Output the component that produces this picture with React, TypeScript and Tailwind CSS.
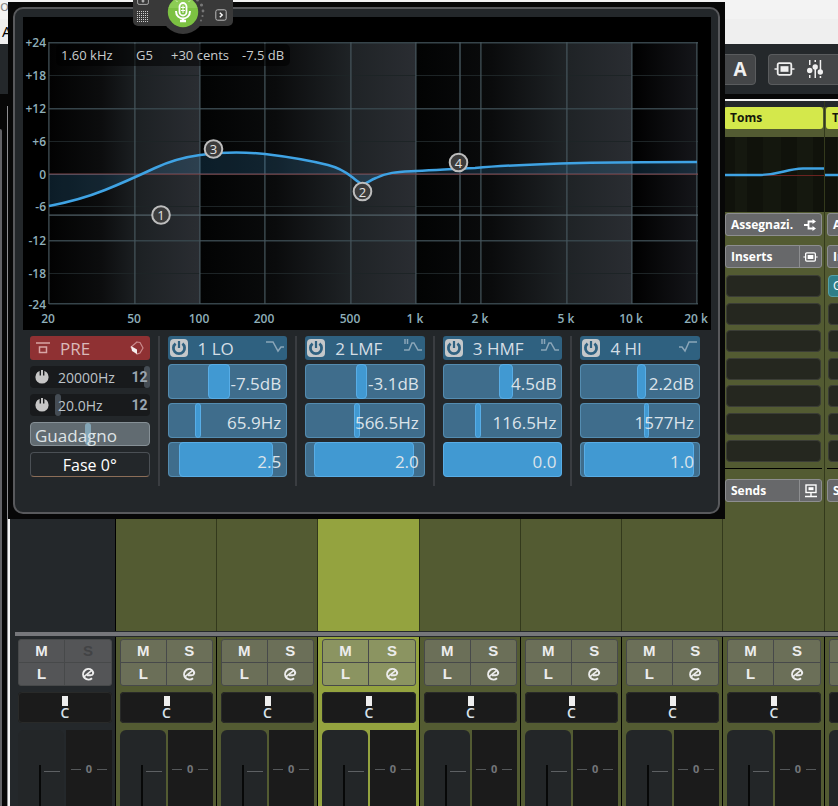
import React from "react";

const UI = "font-['Open_Sans','Noto_Sans',sans-serif]";
const COLUMNS =
  "grid grid-cols-[106px_101px_101px_102px_101px_101px_101px_102px_101px]";

type Bar = { name: string; value: string; from: number; to: number };
type Shape = "lowShelf" | "bell" | "highShelf";
type Band = { title: string; shape: Shape; bars: Bar[] };

const bands: Band[] = [
  {
    title: "1 LO",
    shape: "lowShelf",
    bars: [
      { name: "Gain", value: "-7.5dB", from: 40, to: 62 },
      { name: "Frequency", value: "65.9Hz", from: 27, to: 33 },
      { name: "Q", value: "2.5", from: 11, to: 105 },
    ],
  },
  {
    title: "2 LMF",
    shape: "bell",
    bars: [
      { name: "Gain", value: "-3.1dB", from: 51, to: 62 },
      { name: "Frequency", value: "566.5Hz", from: 49, to: 55 },
      { name: "Q", value: "2.0", from: 9, to: 108 },
    ],
  },
  {
    title: "3 HMF",
    shape: "bell",
    bars: [
      { name: "Gain", value: "4.5dB", from: 56, to: 70 },
      { name: "Frequency", value: "116.5Hz", from: 32, to: 38 },
      { name: "Q", value: "0.0", from: 0, to: 119 },
    ],
  },
  {
    title: "4 HI",
    shape: "highShelf",
    bars: [
      { name: "Gain", value: "2.2dB", from: 56, to: 65 },
      { name: "Frequency", value: "1577Hz", from: 63, to: 68 },
      { name: "Q", value: "1.0", from: 4, to: 113 },
    ],
  },
];

const levelLabels = [
  { y: 42, text: "+24", major: true },
  { y: 75, text: "+18", major: false },
  { y: 108, text: "+12", major: true },
  { y: 141, text: "+6", major: false },
  { y: 174, text: "0", major: false },
  { y: 206, text: "-6", major: false },
  { y: 240, text: "-12", major: true },
  { y: 273, text: "-18", major: false },
  { y: 304, text: "-24", major: true },
];

const freqLabels = [
  { x: 49, text: "20" },
  { x: 135, text: "50" },
  { x: 200, text: "100" },
  { x: 265, text: "200" },
  { x: 351, text: "500" },
  { x: 416, text: "1 k" },
  { x: 481, text: "2 k" },
  { x: 567, text: "5 k" },
  { x: 632, text: "10 k" },
  { x: 697, text: "20 k" },
];

const handles = [
  { x: 161, y: 215, text: "1" },
  { x: 362.5, y: 191.5, text: "2" },
  { x: 213.5, y: 149, text: "3" },
  { x: 458.5, y: 162.5, text: "4" },
];

const CURVE =
  "M49 206 C70 202 85 198 105 190 C125 182 140 175 155 168 C170 161 185 157 200 155 C222 152 245 152 265 154 C290 157 312 161 328 165 C340 168 347 173 352 177 C357 181 360 184 363 184 C367 184 370 180 376 178 C388 172 398 172 416 171 C440 170 450 169 475 168 C510 165 540 164 580 163 C620 162 660 162 697 162";

function PowerGlyph({ className }: { className: string }) {
  return (
    <svg viewBox="0 0 16 16" className={className} aria-hidden="true">
      <path
        d="M4.6 3.6 A5.6 5.6 0 1 0 11.4 3.6"
        fill="none"
        stroke="currentColor"
        strokeWidth="2.8"
      />
      <path d="M8 1 V8" stroke="currentColor" strokeWidth="2.2" />
    </svg>
  );
}

function PowerDisc() {
  return (
    <svg viewBox="0 0 14 14" className="size-3.5" aria-hidden="true">
      <circle cx="7" cy="7" r="6.6" fill="#c6c6c6" />
      <path d="M4.6 0 V5.5 H9.4 V0" fill="#181a1c" />
      <rect x="6" y="0" width="2" height="7" fill="#c6c6c6" />
    </svg>
  );
}

function ShapeGlyph({ shape }: { shape: Shape }) {
  return (
    <svg
      viewBox="0 0 20 16"
      className="mb-1 h-4 w-5 text-[#8ba6b8]"
      fill="none"
      stroke="currentColor"
      strokeWidth="1.5"
      aria-hidden="true"
    >
      {shape === "lowShelf" && <path d="M1 4 H8 L13 13 L16 9 H19" />}
      {shape === "bell" && (
        <>
          <path d="M2 1 V6 M4.500 1 V6" />
          <path d="M1 12 H6 L9 5 H11 L15 12 H19" />
        </>
      )}
      {shape === "highShelf" && <path d="M1 9 H4 L7 13 L11 4 H19" />}
    </svg>
  );
}

function InsertGlyph({ className }: { className: string }) {
  return (
    <svg viewBox="0 0 20 14" className={className} fill="none" aria-hidden="true">
      <path d="M0 7 H3 M17 7 H20" stroke="currentColor" strokeWidth="1.6" />
      <rect x="3.2" y="1.2" width="13.6" height="11.6" rx="1.5" stroke="currentColor" strokeWidth="1.8" />
      <rect x="6" y="4.2" width="8" height="5.6" fill="currentColor" />
    </svg>
  );
}

function Graph() {
  return (
    <svg viewBox="23 17 688 313" className={`block w-full ${UI}`} role="img" aria-label="EQ curve">
      <defs>
        <linearGradient id="decade">
          <stop offset="0" stopColor="#020303" />
          <stop offset="0.35" stopColor="#0a0b0c" />
          <stop offset="0.7" stopColor="#1f2326" />
          <stop offset="1" stopColor="#2a2d32" />
        </linearGradient>
        <linearGradient id="tail">
          <stop offset="0" stopColor="#000" />
          <stop offset="1" stopColor="#15161a" />
        </linearGradient>
        <linearGradient id="head">
          <stop offset="0" stopColor="#020202" />
          <stop offset="0.35" stopColor="#0c0d0e" />
          <stop offset="0.6" stopColor="#1d2124" />
          <stop offset="1" stopColor="#2a2d32" />
        </linearGradient>
      </defs>
      <rect x="23" y="17" width="688" height="313" fill="#000" />
      <rect x="49" y="42" width="151" height="262" fill="url(#head)" />
      <rect x="200" y="42" width="216" height="262" fill="url(#decade)" />
      <rect x="416" y="42" width="216" height="262" fill="url(#decade)" />
      <rect x="632" y="42" width="65" height="262" fill="url(#tail)" />
      {levelLabels.map((l) => (
        <rect
          key={l.text}
          x="49"
          y={l.text === "-24" ? 303 : l.y}
          width="649"
          height={l.major ? 1.5 : 1}
          fill={l.major ? "#36444a" : "#1d2426"}
        />
      ))}
      {freqLabels.map((f) => (
        <rect key={f.text} x={f.x - 0.7} y="42" width="1.2" height="262" fill="#46565d" />
      ))}
      <rect x="459.300" y="42" width="1.4" height="262" fill="#46565d" />
      <rect x="49" y="214.500" width="649" height="1.2" fill="#53636a" />
      <rect x="49" y="173.500" width="649" height="1.2" fill="#7d464b" />
      <path d={`${CURVE} V174 H49 Z`} fill="#3aa0e0" fillOpacity="0.17" />
      <path d={CURVE} fill="none" stroke="#3fa3e4" strokeWidth="2.500" />
      <rect x="56" y="44" width="234" height="22" rx="5" fill="#000" fillOpacity="0.55" />
      <g fill="#c9cccd" fontSize="13">
        <text x="61" y="60">1.60 kHz</text>
        <text x="136" y="60">G5</text>
        <text x="171" y="60">+30 cents</text>
        <text x="242" y="60">-7.5 dB</text>
      </g>
      <g fill="#8fafba" fontSize="12" fontWeight="600">
        {levelLabels.map((l) => (
          <text key={l.text} x="46" y={l.y + 5} textAnchor="end">
            {l.text}
          </text>
        ))}
        {freqLabels.map((f) => (
          <text key={f.text} x={f.x - 1} y="323" textAnchor="middle">
            {f.text}
          </text>
        ))}
      </g>
      {handles.map((h) => (
        <g key={h.text}>
          <circle cx={h.x} cy={h.y} r="8.8" fill="#3c3c3c" stroke="#bdbdbd" strokeWidth="2" />
          <text x={h.x} y={h.y + 5} textAnchor="middle" fontSize="13" fill="#e2e2e2">
            {h.text}
          </text>
        </g>
      ))}
    </svg>
  );
}

function BarSlider({ bar, band }: { bar: Bar; band: string }) {
  const left = `${(bar.from / 119) * 100}%`;
  const width = `${((bar.to - bar.from) / 119) * 100}%`;
  return (
    <label className="relative flex h-[35px] items-center justify-end overflow-hidden rounded-sm bg-[#3f6d8c] pr-1.5 text-[17px] text-[#dbe3ea] outline outline-1 -outline-offset-1 outline-[#548cb0]">
      <span
        className="absolute inset-y-0 rounded-sm border border-[#58ade6] bg-[#4199d2]"
        style={{ left, width }}
      />
      <span className="relative pt-1">{bar.value}</span>
      <input
        type="range"
        aria-label={`${band} ${bar.name}`}
        defaultValue={Math.round((bar.to / 119) * 100)}
        className="absolute inset-0 opacity-0"
      />
    </label>
  );
}

function BandColumn({ band }: { band: Band }) {
  return (
    <section className="flex min-w-0 flex-1 flex-col gap-1">
      <header className="flex h-6 items-center rounded-[3px] bg-[#2f6180] px-0.5 text-[17px] text-[#d5dee5]">
        <button
          aria-label={`${band.title} on`}
          className="flex size-[18px] items-center justify-center rounded-sm bg-[#c5c8ca] text-[#2f6180]"
        >
          <PowerGlyph className="size-4" />
        </button>
        <h2 className="ml-2.5 flex-1 pt-px leading-6">{band.title}</h2>
        <button aria-label={`${band.title} filter type`}>
          <ShapeGlyph shape={band.shape} />
        </button>
      </header>
      {band.bars.map((bar) => (
        <BarSlider key={bar.name} bar={bar} band={band.title} />
      ))}
    </section>
  );
}

function CutRow({ value, knob }: { value: string; knob: string }) {
  return (
    <div className="relative flex h-[22px] items-center rounded-sm bg-[#181a1c] pl-[5px] pr-0.5 text-sm text-[#bdc3c8]">
      <span className={`absolute inset-y-0 w-1.5 rounded-sm bg-[#454d55] ${knob}`} />
      <button aria-label={`Filter ${value} on`}>
        <PowerDisc />
      </button>
      <label className="relative ml-[9px] flex-1 pt-0.5">
        {value}
        <input type="range" aria-label={`Filter ${value}`} className="absolute inset-0 w-full opacity-0" />
      </label>
      <button className="relative font-['Roboto',sans-serif] text-sm font-bold leading-none text-[#9aa5b0]">
        12
      </button>
    </div>
  );
}

function PreColumn() {
  return (
    <section className="flex min-w-0 flex-1 flex-col gap-1.5">
      <header className="flex h-6 items-center rounded-[3px] bg-[#8f3133] px-1.5 text-[17px] text-[#d9b9ba]">
        <svg viewBox="0 0 14 12" className="h-3 w-3.5" fill="none" stroke="#d8a5a5" strokeWidth="1.5" aria-hidden="true">
          <path d="M0 1 H14" />
          <rect x="3.5" y="5" width="7" height="5.5" />
        </svg>
        <h2 className="ml-2.5 flex-1 pt-px leading-6">PRE</h2>
        <svg viewBox="0 0 14 14" className="size-3.5" aria-hidden="true">
          <path d="M7 1 L10 1.500 L13 7 L10 12 L7 13 L1 6 Z" fill="none" stroke="#c9898b" strokeWidth="1.2" />
          <path d="M1 5 L7 8.500 V13 L2 10 Z" fill="#f5eeee" />
        </svg>
      </header>
      <CutRow value="20000Hz" knob="right-0" />
      <CutRow value="20.0Hz" knob="left-[25px]" />
      <label className="relative flex h-6 items-center rounded-sm border border-[#869096] bg-[#616b71] px-1 text-[17px] text-[#dfe4e6]">
        <span className="absolute inset-y-0 left-[46%] w-1.5 rounded-sm bg-[#83a5b6]" />
        <span className="relative pt-1">Guadagno</span>
        <input type="range" className="absolute inset-0 w-full opacity-0" />
      </label>
      <button className="h-[25px] rounded-sm border border-[#4b5055] border-b-[#8c6e58] text-base leading-none text-white">
        Fase 0°
      </button>
    </section>
  );
}

function EqWindow() {
  return (
    <div className={`absolute left-2 top-0.5 w-[717px] bg-[#070707] p-[5px] ${UI}`}>
      <div className="h-[507px] rounded-[10px] border-2 border-[#58595c] bg-[#23272a] pl-2 pr-[7px] pt-2">
        <Graph />
        <div className="flex pl-[7px] pr-[11px] pt-1.5">
          <PreColumn />
          {bands.map((band) => (
            <React.Fragment key={band.title}>
              <div className="flex w-[18px] shrink-0 justify-center">
                <div className="h-[150px] w-0.5 bg-[#3a3d41]" />
              </div>
              <BandColumn band={band} />
            </React.Fragment>
          ))}
        </div>
      </div>
    </div>
  );
}

function DictationBar() {
  return (
    <div className="absolute left-[133px] top-0 flex h-[26px] w-[100px] items-center justify-between rounded-b-[5px] bg-[#393939] px-1">
      <svg viewBox="0 0 12 26" className="h-[26px] w-3" fill="none" aria-hidden="true">
        <rect x="0.6" y="-5" width="10.8" height="9.4" rx="1.5" stroke="#aaa" />
        <path d="M4.500 1 H7.500 M6 0 V2.500" stroke="#ccc" strokeWidth="1.2" />
        {[11.500, 13.500, 15.500, 17.500, 19.500, 21.500].map((y) => (
          <path key={y} d={`M0 ${y} H12`} stroke="#cfcfcf" strokeWidth="1" strokeDasharray="1 1" />
        ))}
      </svg>
      <button aria-label="Microphone" className="absolute left-7 -top-[10px]">
        <svg viewBox="0 0 44 44" className="size-11">
          <circle cx="22" cy="22" r="22" fill="#393939" />
          <circle cx="22" cy="22" r="15.2" fill="#7cc142" />
          <path d="M7.5 18 A15.2 15.2 0 0 1 36.5 18 Z" fill="#8ccc55" />
          <rect x="18.5" y="13" width="7" height="12.500" rx="3.5" fill="none" stroke="#fff" strokeWidth="1.8" />
          <path d="M22 15.500 V23 M20 17.500 H24 M20 20.500 H24" stroke="#fff" strokeWidth="1" />
          <path d="M15 21 C15 31 29 31 29 21" fill="none" stroke="#fff" strokeWidth="2" />
          <path d="M22 28 V32 M19 31 H25" stroke="#fff" strokeWidth="2.400" />
          <path d="M16.5 12 L15 10.5 M27.5 12 L29 10.5" stroke="#d9f0c4" />
          <g fill="#777">
            <circle cx="36.5" cy="10" r="1.5" />
            <circle cx="40.5" cy="15" r="1.6" />
            <circle cx="42" cy="21" r="1.4" />
            <circle cx="41.5" cy="26" r="1.1" />
            <circle cx="40" cy="30.5" r="0.9" />
          </g>
        </svg>
      </button>
      <button aria-label="More" className="mt-1 mr-0.5">
        <svg viewBox="0 0 12 12" className="size-3" fill="none" aria-hidden="true">
          <rect x="0.8" y="0.8" width="10.4" height="10.4" rx="1.8" stroke="#bbb" />
          <path d="M4.8 3.8 L7.2 6 L4.8 8.2" stroke="#fff" strokeWidth="1.4" />
        </svg>
      </button>
    </div>
  );
}

function RackHeader({
  label,
  divided,
  children,
}: {
  label: string;
  divided?: boolean;
  children: React.ReactNode;
}) {
  return (
    <button className="flex h-[23px] w-full items-stretch overflow-hidden rounded-[3px] border border-[#8d8e90] bg-[#67686a] text-xs font-bold text-white">
      <span className="flex-1 overflow-hidden whitespace-nowrap pl-[5px] text-left leading-[21px]">{label}</span>
      <span
        className={
          divided
            ? "flex w-[22px] items-center justify-center border-l border-[#8d8e90]"
            : "flex w-[22px] items-center justify-center"
        }
      >
        {children}
      </span>
    </button>
  );
}

function Rack({ name, plugin, curve }: { name: string; plugin?: string; curve: string }) {
  return (
    <div className={`h-full ${UI}`}>
      <div className="h-1.5 bg-[#24282b]" />
      <h3 className="mx-px h-[22px] rounded-[3px] bg-[#d4e84b] pl-1.5 text-xs font-bold leading-[22px] text-[#15180a]">
        {name}
      </h3>
      <div className="mt-2 h-[75px] bg-[#10120b]">
        <svg viewBox="0 0 101 75" className="h-full w-full" preserveAspectRatio="none" fill="none" aria-hidden="true">
          <rect x="12" width="12" height="75" fill="#15180f" />
          <rect x="40" width="18" height="75" fill="#14170e" />
          <rect x="74" width="16" height="75" fill="#15180f" />
          <path d="M0 38.5 H101" stroke="#6a2320" />
          <path d={curve} stroke="#3fa3e4" strokeWidth="2.400" />
        </svg>
      </div>
      <div className="px-0.5 pt-px">
        <RackHeader label="Assegnazi.">
          <svg viewBox="0 0 12 12" className="size-3" fill="none" stroke="currentColor" strokeWidth="1.8" aria-hidden="true">
            <path d="M0 6 H4 M9.5 2.5 H4.5 V9.5 H9.5" />
            <path d="M8.5 0 L12 2.5 L8.5 5 Z M8.5 7 L12 9.5 L8.5 12 Z" fill="currentColor" stroke="none" />
          </svg>
        </RackHeader>
        <div className="h-[9px]" />
        <RackHeader label="Inserts" divided>
          <InsertGlyph className="h-2.5 w-[15px]" />
        </RackHeader>
        <ul className="mt-[7px] flex h-[187px] flex-col justify-between px-px">
          {[0, 1, 2, 3, 4, 5, 6].map((slot) =>
            plugin && slot === 0 ? (
              <li key={slot} className="h-[22px] rounded-sm border border-[#55a0a8] bg-[#2f7e88] pl-1 text-xs leading-5 text-white">
                {plugin}
              </li>
            ) : (
              <li key={slot} className="h-[22px] rounded-sm border border-[#3b3d36] bg-[#25271f]" />
            ),
          )}
        </ul>
        <div className="mt-1.5 mb-2.5 h-px bg-black" />
        <RackHeader label="Sends" divided>
          <svg viewBox="0 0 14 14" className="size-3.5" fill="none" stroke="currentColor" strokeWidth="1.4" aria-hidden="true">
            <rect x="2" y="1" width="10" height="7.5" />
            <rect x="4.5" y="3.2" width="5" height="3" fill="currentColor" stroke="none" />
            <path d="M7 8.5 V12 M1 12.5 H13" />
          </svg>
        </RackHeader>
      </div>
    </div>
  );
}

type Channel = { tone: "dark" | "olive" | "lime"; rack?: React.ReactNode };

const channels: Channel[] = [
  { tone: "dark" },
  { tone: "olive" },
  { tone: "olive" },
  { tone: "lime" },
  { tone: "olive" },
  { tone: "olive" },
  { tone: "olive" },
  {
    tone: "olive",
    rack: <Rack name="Toms" curve="M0 38 H35 C58 38 62 32 80 31.500 H101" />,
  },
  { tone: "olive", rack: <Rack name="T" plugin="G" curve="M0 38 H101" /> },
];

const toneBg = { dark: "bg-[#24282b]", olive: "bg-[#535b32]", lime: "bg-[#94a33f]" };
const padBg = { dark: "bg-[#545557]", olive: "bg-[#6b6f58]", lime: "bg-[#8b9461]" };
const edge = { dark: "border-black", olive: "border-[#33391c]", lime: "border-[#33391c]" };

function Strip({ tone, index }: { tone: Channel["tone"]; index: number }) {
  const key = "flex items-center justify-center text-[15px] font-bold text-[#ececec]";
  return (
    <div
      className={`flex flex-col border-r border-black pr-[3px] pt-0.5 ${tone === "dark" ? "pl-2" : "pl-1"} ${toneBg[tone]}`}
    >
      <div
        className={`grid h-[47px] grid-cols-2 grid-rows-2 overflow-hidden rounded-[3px] border border-[#47494a] font-['Liberation_Sans',Arial,sans-serif] leading-none ${padBg[tone]}`}
      >
        <button className={`${key} border-b border-r border-[#47494a]`}>M</button>
        <button
          className={
            tone === "dark"
              ? "flex items-center justify-center border-b border-[#47494a] text-[15px] font-bold text-[#424345]"
              : `${key} border-b border-[#47494a]`
          }
        >
          S
        </button>
        <button className={`${key} border-r border-[#47494a]`}>L</button>
        <button aria-label="Edit channel" className={key}>
          <svg viewBox="0 0 14 14" className="size-3.5" fill="none" stroke="currentColor" strokeWidth="2" aria-hidden="true">
            <path d="M11 11.200 A5.300 5.300 0 1 1 10.800 3.200 C13 5.500 12.500 8.300 9.500 8.300 H6" />
            <path d="M2.800 9.800 L10.800 3.400" strokeWidth="1.700" />
          </svg>
        </button>
      </div>
      <label className="relative mt-1.5 flex h-[31px] flex-col items-center rounded bg-[#1b1b1b] pt-1 outline outline-1 -outline-offset-1 outline-[#292a29]">
        <span className="h-2.5 w-1.5 bg-[#eee]" />
        <span className={`text-sm font-semibold leading-[13px] text-[#d9e2ea] ${UI}`}>C</span>
        <input type="range" aria-label={`Pan ${index + 1}`} className="absolute inset-0 w-full opacity-0" />
      </label>
      <div className="mt-[7px] grid flex-1 grid-cols-2 gap-0.5">
        <label className="relative flex rounded-t-md bg-[#232628] pl-[21px] pt-[35px]">
          <span className="w-0.5 bg-[#070808]" />
          <span className="ml-[3px] mt-1.5 h-px w-4 bg-[#5d6063]" />
          <input type="range" aria-label={`Volume ${index + 1}`} className="absolute inset-0 w-full opacity-0" />
        </label>
        <div className={`flex items-start justify-center gap-[5px] bg-[#1b1b1b] pt-8 text-[11px] font-bold leading-[14px] text-[#737679] ${UI}`}>
          <span className="mt-[7px] h-px w-2.5 bg-[#55585a]" />
          0
          <span className="mt-[7px] h-px w-2.5 bg-[#55585a]" />
        </div>
      </div>
    </div>
  );
}

function Mixer() {
  return (
    <div className="flex min-h-0 flex-1 bg-[#070707]">
      <div className="flex w-[7px] shrink-0 pt-[30px]">
        <div className="w-0.5 rounded-tr bg-[#626266]" />
      </div>
      <div className="mt-[7px] w-px shrink-0 bg-[#8d8d90]" />
      <main className="flex min-w-0 flex-1 flex-col overflow-hidden border-l-2 border-t-2 border-[#f3f3f3] bg-[#24282b]">
        <div className={`${COLUMNS} h-[530px] shrink-0`}>
          {channels.map((c, i) => (
            <div key={i} className={`overflow-hidden border-r ${edge[c.tone]} ${toneBg[c.tone]}`}>
              {c.rack}
            </div>
          ))}
        </div>
        <div className="ml-[5px] h-1.5 shrink-0 border-y border-[#24282b] bg-[#76777b]" />
        <div className={`${COLUMNS} min-h-0 flex-1`}>
          {channels.map((c, i) => (
            <Strip key={i} tone={c.tone} index={i} />
          ))}
        </div>
      </main>
    </div>
  );
}

export default function App() {
  return (
    <div className="relative flex h-screen flex-col overflow-hidden bg-[#070707]">
      <div className={`h-11 shrink-0 bg-[#efefef] ${UI}`}>
        <div className="h-[19px] overflow-hidden bg-[#f3f3f3] text-[15px] leading-[11px] text-[#8a8a8a]">o</div>
        <div className="pl-0.5 text-[15px] leading-[25px] text-black">A</div>
      </div>
      <div className="flex h-[50px] shrink-0 items-center justify-end gap-3 bg-[#24282b]">
        <button
          className={`h-[31px] w-12 rounded border border-[#5a5c5e] bg-[#444648] pl-4 text-[19px] font-bold leading-none text-[#f0f0f0] ${UI}`}
        >
          A
        </button>
        <div className="flex h-[31px] w-[70px] items-center gap-3 rounded-l border border-r-0 border-[#5a5c5e] bg-[#444648] pl-[5px] text-[#f0f0f0]">
          <button aria-label="Inserts view">
            <InsertGlyph className="h-3.5 w-[21px]" />
          </button>
          <button aria-label="Faders view">
            <svg viewBox="0 0 16 18" className="h-[18px] w-4" fill="currentColor" aria-hidden="true">
              <path d="M2 0 h1.5 v5 h-1.5 Z M2 15 h1.5 v3 h-1.5 Z M7.5 0 h1.5 v2 h-1.5 Z M7.5 7 h1.5 v11 h-1.5 Z M12.7 0 h1.5 v12 h-1.5 Z M12.7 16 h1.5 v2 h-1.5 Z" />
              <circle cx="2.7" cy="10.5" r="2.7" />
              <circle cx="8.2" cy="7" r="2.7" />
              <circle cx="13.3" cy="12" r="2.7" />
            </svg>
          </button>
        </div>
      </div>
      <div className="h-[5px] shrink-0 bg-[#070707]" />
      <Mixer />
      <EqWindow />
      <DictationBar />
    </div>
  );
}
